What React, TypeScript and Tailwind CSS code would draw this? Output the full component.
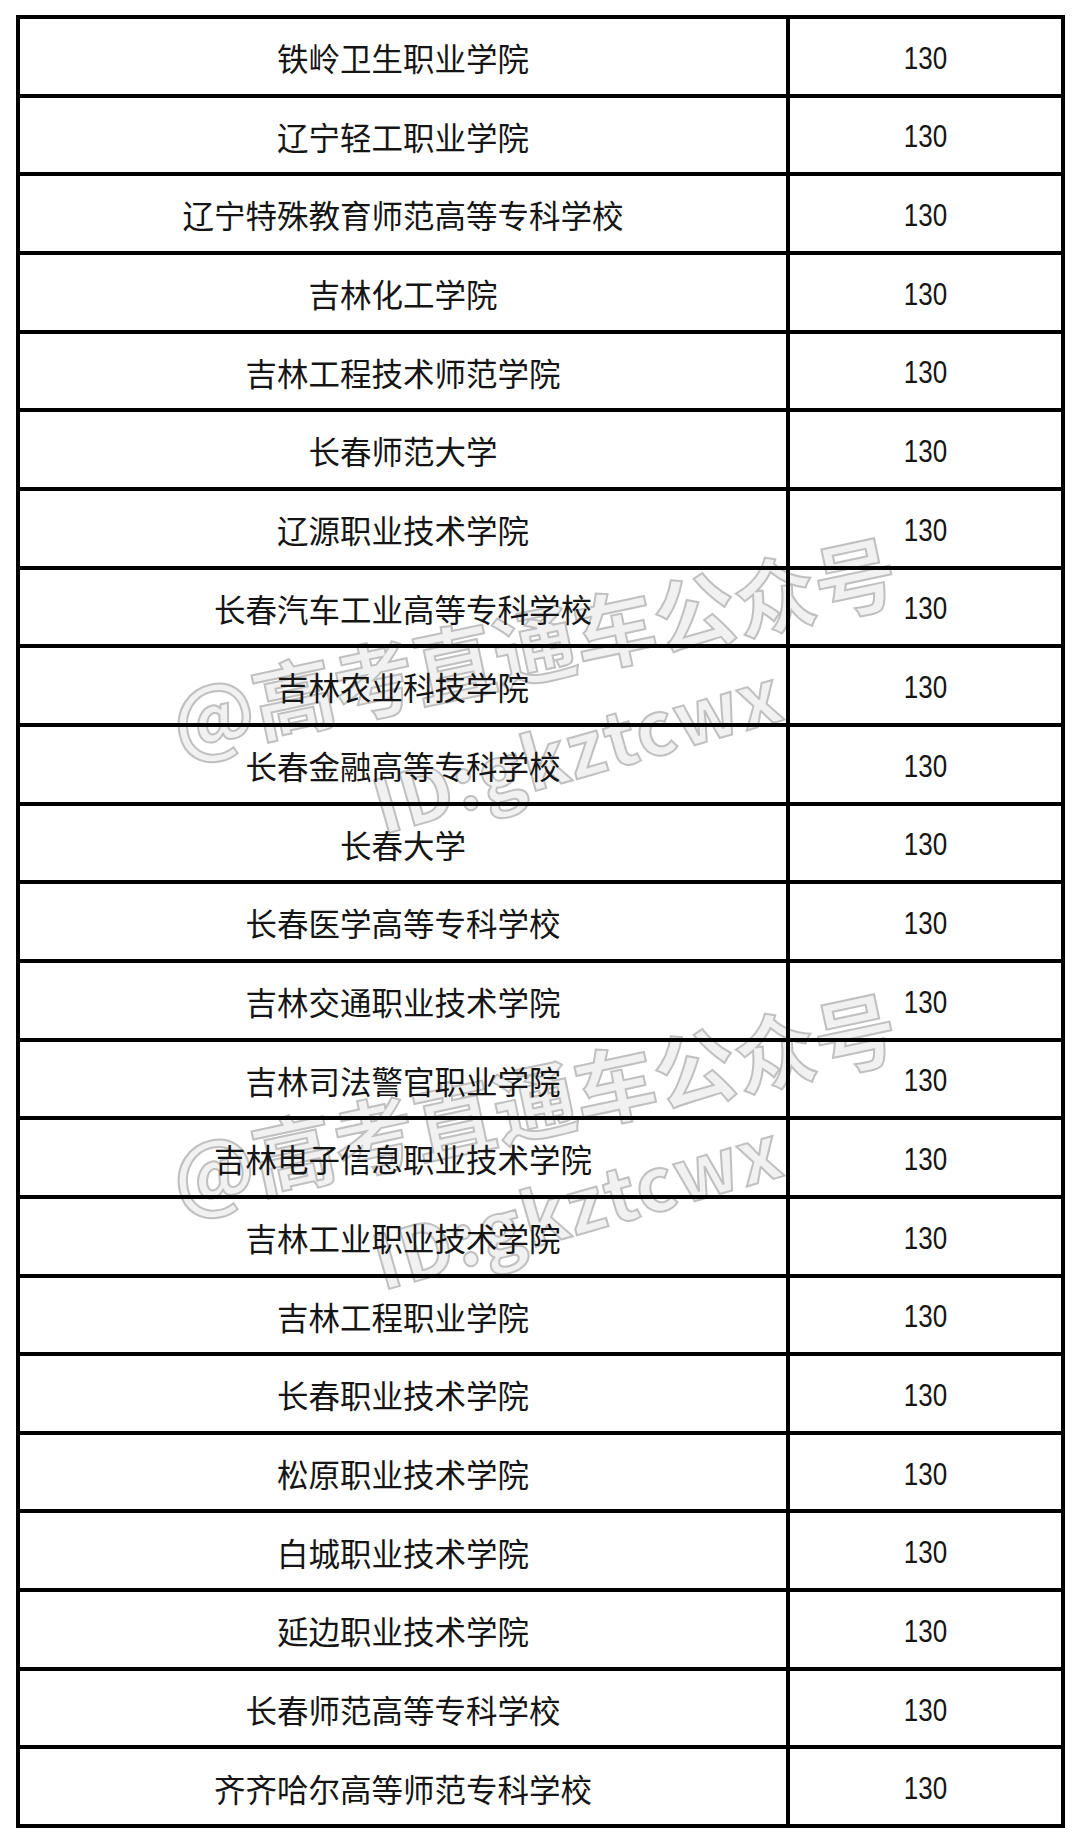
import React from "react";

const schools = [
  "铁岭卫生职业学院",
  "辽宁轻工职业学院",
  "辽宁特殊教育师范高等专科学校",
  "吉林化工学院",
  "吉林工程技术师范学院",
  "长春师范大学",
  "辽源职业技术学院",
  "长春汽车工业高等专科学校",
  "吉林农业科技学院",
  "长春金融高等专科学校",
  "长春大学",
  "长春医学高等专科学校",
  "吉林交通职业技术学院",
  "吉林司法警官职业学院",
  "吉林电子信息职业技术学院",
  "吉林工业职业技术学院",
  "吉林工程职业学院",
  "长春职业技术学院",
  "松原职业技术学院",
  "白城职业技术学院",
  "延边职业技术学院",
  "长春师范高等专科学校",
  "齐齐哈尔高等师范专科学校",
];

function Watermark({ top }: { top: number }) {
  return (
    <>
      <div
        className="absolute left-[172px] origin-left rotate-[-12deg] whitespace-nowrap text-[82px] leading-[82px] font-bold text-[#f1f1f1] [-webkit-text-stroke:2px_#c0c0c0] [font-family:'Noto_Sans_CJK_SC',sans-serif]"
        style={{ top: top - 41 }}
      >
        @高考直通车公众号
      </div>
      <div
        className="absolute left-[374px] origin-left rotate-[-16deg] whitespace-nowrap text-[74px] leading-[74px] font-bold tracking-[2px] text-[#f1f1f1] [-webkit-text-stroke:2px_#c0c0c0] [font-family:'Noto_Sans_CJK_SC',sans-serif]"
        style={{ top: top + 84 - 37 }}
      >
        ID:gkztcwx
      </div>
    </>
  );
}

export default function App() {
  return (
    <div className="relative w-[1080px] h-[1841px] bg-white overflow-hidden">
      <div className="absolute inset-0 z-0">
        <Watermark top={720} />
        <Watermark top={1176} />
      </div>
      <div className="relative z-10 pl-[16px] pt-[15px]">
        <div className="flex flex-col w-[1049px] h-[1813px] border-[4px] border-black">
          {schools.map((s, i) => (
            <div
              key={i}
              className={
                "flex flex-1 min-h-0 " + (i > 0 ? "border-t-[4px] border-black" : "")
              }
            >
              <div className="flex w-[766px] items-center justify-center pt-[3px] text-[31.5px] leading-none text-[#151515] [font-family:'Noto_Sans_CJK_SC',sans-serif]">
                {s}
              </div>
              <div className="flex flex-1 items-center justify-center border-l-[4px] border-black pt-[3px]">
                <span className="inline-block scale-y-[1.2] text-[26px] leading-none text-[#151515] [font-family:'Liberation_Sans',Arial,sans-serif]">
                  130
                </span>
              </div>
            </div>
          ))}
        </div>
      </div>
    </div>
  );
}
